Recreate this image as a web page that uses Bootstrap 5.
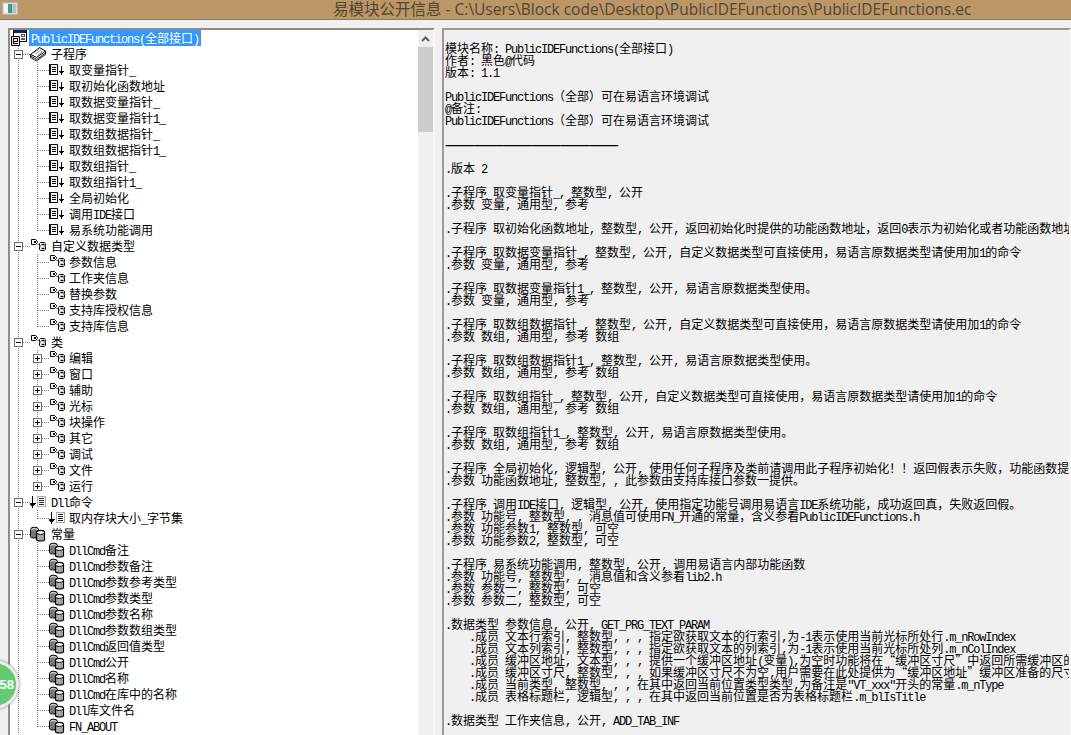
<!DOCTYPE html>
<html lang="zh">
<head>
<meta charset="utf-8">
<title>易模块公开信息</title>
<link href="https://cdn.jsdelivr.net/npm/bootstrap@5.3.0/dist/css/bootstrap.min.css" rel="stylesheet">
<style>
html,body{height:100%;overflow:hidden}
body{background:#f0f0f0;color:#000;font:12px/16px "Noto Sans CJK SC","Liberation Sans",sans-serif}
.asc{font-family:"Liberation Mono",monospace;letter-spacing:-1.2px;line-height:0}
.titlebar{height:20px;background:#bb9767;border-bottom:1px solid #8e7a60;position:relative}
.titlebar-text{font:15.5px/18px "Open Sans","Noto Sans CJK SC",sans-serif;color:#54452f;margin-left:333px;white-space:nowrap}
.appicon{width:16px;height:13px;margin:2px 0 0 2px;flex:none}
.workspace{height:715px;padding:8px 0 0 8px;gap:7px}
.tree-panel{width:427px;background:#fff;border:2px solid;border-color:#8c8c8c #f6f6f6 #f6f6f6 #8c8c8c;height:720px}
.tree-scroll{flex:1;overflow:hidden;min-width:0}
.vbar{width:15px;background:#f0f0f0;flex:none}
.vbar-btn{height:17px;color:#606060}
.vbar-thumb{height:85px;background:#cdcdcd}
.tree-list,.tree-list ul{list-style:none;margin:0;padding:0}
.trow{height:16px;white-space:nowrap}
.hl{background:#3399ff;color:#fff;padding:0 2px;height:16px;margin-left:2px}
.ico{width:16px;height:16px;flex:none;overflow:visible}
.toggle{width:9px;height:9px;flex:none}
.l0{padding-left:1px}
.l1{padding-left:4px}
.l2{padding-left:23px}
.conn{border-top:1px dotted #808080;flex:none;height:0}
.c1{width:7px}
.c2{width:12px;margin-left:4px}
.c3{width:7px}
.lab1{margin-left:5px}
.lab2{margin-left:4px}
.trunk{background:repeating-linear-gradient(#808080 0 1px,transparent 1px 2px) 8px 0/1px 100% no-repeat}
.branch{background:repeating-linear-gradient(#808080 0 1px,transparent 1px 2px) 27px 0/1px 100% no-repeat}
.branch:last-child{background-size:1px 8px}
.doc-panel{flex:1;min-width:0;height:720px;border:2px solid;border-color:#9a9a9a #f6f6f6 #f6f6f6 #9a9a9a;background:#f0f0f0;overflow:hidden}
.doc-text{margin:0;padding:12px 0 6px 1px;font:12px/12px "Noto Sans CJK SC","Liberation Sans",sans-serif;white-space:pre;color:#000;overflow:hidden;background:none;border:0}
.rule-dash{display:inline-block;width:180px;height:12px;overflow:hidden;vertical-align:top;font-weight:700;letter-spacing:-1.2px}
.float-ball{position:absolute;left:-30px;top:660px;width:49px;height:49px;border-radius:50%;background:#63cb73;border:3px solid #e9eee9;box-shadow:0 0 3px #777;color:#fff;font:bold 13px/43px "Liberation Sans",sans-serif;text-align:right;padding-right:2px}
</style>
</head>
<body>
<svg width="0" height="0" class="position-absolute">
<defs>
<symbol id="t-minus" viewBox="0 0 9 9"><rect x=".5" y=".5" width="8" height="8" fill="#fff" stroke="#707070"/><path d="M2 4.500h5" stroke="#000"/></symbol>
<symbol id="t-plus" viewBox="0 0 9 9"><rect x=".5" y=".5" width="8" height="8" fill="#fff" stroke="#707070"/><path d="M2 4.500h5M4.500 2v5" stroke="#000"/></symbol>
<symbol id="i-sub" viewBox="0 0 16 16"><path d="M1.500 2.500h7v10h-7z" fill="#fff" stroke="#000"/><path d="M.5 2v11" stroke="#000"/><path d="M3 5.500h4M3 7.500h4M3 9.500h4" stroke="#000"/><path d="M12.500 4v8.500" stroke="#000"/><path d="M10 9h5v1h-1v1h-1v2h-1v-2h-1v-1h-1z" fill="#000"/></symbol>
<symbol id="i-struct" viewBox="-1 0 16 16" overflow="visible"><path d="M.5 1.500h4l2 2v1l-2 2h-4z" fill="#fff" stroke="#000"/><path d="M3 3h2v2h-2z" fill="#000"/><path d="M6.500 6.500h2" stroke="#000" stroke-dasharray="1 1"/><path d="M9.500 4.500h4l1 1v2l-1 .5 1 .5v3l-1 1h-4l-1-1v-3l1-.5-1-.5v-2z" fill="#fff" stroke="#000"/><path d="M10.500 6.500h3M10.500 10.500h3" stroke="#000" stroke-width="1.500"/></symbol>
<symbol id="i-dll" viewBox="0 0 16 16"><path d="M2.500 2v10" stroke="#000"/><path d="M0 9h6v1h-1v1h-1v1h-1v2h-1v-2h-1v-1h-1v-1h0z" fill="#000"/><path d="M7.500 2.500h8v10h-8z" fill="#fff" stroke="#555" stroke-dasharray="1 1"/><path d="M9 4.500h5M9 6.500h5M9 8.500h5M9 10.500h5" stroke="#222"/></symbol>
<symbol id="i-const" viewBox="0 0 16 16"><path d="M.5 3.500c0-3 8-3 8 0v7c0 2-8 2-8 0z" fill="#777" stroke="#000"/><path d="M1.500 3.500c0-1 6-1 6 0" fill="none" stroke="#fff"/><path d="M6.500 6.500c0-3 8-3 8 0v7c0 2-8 2-8 0z" fill="#a6a6a6" stroke="#000" stroke-width="1.200"/><path d="M6.500 6.500c0 2.500 8 2.500 8 0s-8-2.500-8 0z" fill="#fff" stroke="#000"/></symbol>
<symbol id="i-stack" viewBox="0 0 16 16"><path d="M.5 8.500l9-7 6 3.500-9 6.500z" fill="#fff" stroke="#000"/><path d="M.5 8.500v3l6 3.500 9-6.500v-3.500M.5 10l6 3.500 9-6.500" fill="none" stroke="#000" stroke-width=".9"/><path d="M3.500 7l6-4.500M5.500 8l6-4.500M7.500 9.500l5-4" stroke="#777" stroke-width=".8"/></symbol>
<symbol id="i-root" viewBox="0 0 16 16"><path d="M2 0h14v12h-14z" fill="#fff"/><path d="M3 0h13v3h-13z" fill="#0a246a"/><path d="M2 0h1v12h-1zM15 0h1v12h-1zM2 11h14v1h-14z" fill="#000"/><path d="M10 4h4v3h-4zM10 8h4v2h-4z" fill="#555"/><path d="M11 5h2v1h-2z" fill="#fff"/><path d="M.5 6.500h8v9h-8z" fill="#ffe98a" stroke="#000"/><path d="M2 8h5v4h-4v1h4v1h-5z" fill="#0000a8"/><path d="M3 9v2h3v-2z" fill="#ffe98a"/></symbol>
</defs>
</svg>

<header class="titlebar d-flex">
  <svg class="appicon" viewBox="0 0 16 13"><rect width="16" height="13" fill="#d8d8d8" stroke="#9a9a9a"/><rect x="2" y="2" width="4" height="9" fill="#f2f2f2"/><rect x="6" y="2" width="4" height="9" fill="#3f9f8f"/><rect x="10" y="2" width="4" height="9" fill="#b8c4c4"/></svg>
  <div class="titlebar-text position-absolute">易模块公开信息 - C:\Users\Block code\Desktop\PublicIDEFunctions\PublicIDEFunctions.ec</div>
</header>

<main class="workspace d-flex">
  <section class="tree-panel d-flex">
    <div class="tree-scroll" data-asc>
      <ul class="tree-list">
        <li class="trow d-flex align-items-center l0"><svg class="ico"><use href="#i-root"/></svg><span class="hl">PublicIDEFunctions(全部接口)</span></li>
        <li class="trunk">
          <div class="trow d-flex align-items-center l1"><svg class="toggle"><use href="#t-minus"/></svg><span class="conn c1"></span><svg class="ico"><use href="#i-stack"/></svg><span class="lab1">子程序</span></div>
          <ul>
            <li class="branch"><div class="trow d-flex align-items-center l2"><span class="conn c2"></span><svg class="ico"><use href="#i-sub"/></svg><span class="lab2">取变量指针_</span></div></li>
            <li class="branch"><div class="trow d-flex align-items-center l2"><span class="conn c2"></span><svg class="ico"><use href="#i-sub"/></svg><span class="lab2">取初始化函数地址</span></div></li>
            <li class="branch"><div class="trow d-flex align-items-center l2"><span class="conn c2"></span><svg class="ico"><use href="#i-sub"/></svg><span class="lab2">取数据变量指针_</span></div></li>
            <li class="branch"><div class="trow d-flex align-items-center l2"><span class="conn c2"></span><svg class="ico"><use href="#i-sub"/></svg><span class="lab2">取数据变量指针1_</span></div></li>
            <li class="branch"><div class="trow d-flex align-items-center l2"><span class="conn c2"></span><svg class="ico"><use href="#i-sub"/></svg><span class="lab2">取数组数据指针_</span></div></li>
            <li class="branch"><div class="trow d-flex align-items-center l2"><span class="conn c2"></span><svg class="ico"><use href="#i-sub"/></svg><span class="lab2">取数组数据指针1_</span></div></li>
            <li class="branch"><div class="trow d-flex align-items-center l2"><span class="conn c2"></span><svg class="ico"><use href="#i-sub"/></svg><span class="lab2">取数组指针_</span></div></li>
            <li class="branch"><div class="trow d-flex align-items-center l2"><span class="conn c2"></span><svg class="ico"><use href="#i-sub"/></svg><span class="lab2">取数组指针1_</span></div></li>
            <li class="branch"><div class="trow d-flex align-items-center l2"><span class="conn c2"></span><svg class="ico"><use href="#i-sub"/></svg><span class="lab2">全局初始化</span></div></li>
            <li class="branch"><div class="trow d-flex align-items-center l2"><span class="conn c2"></span><svg class="ico"><use href="#i-sub"/></svg><span class="lab2">调用IDE接口</span></div></li>
            <li class="branch"><div class="trow d-flex align-items-center l2"><span class="conn c2"></span><svg class="ico"><use href="#i-sub"/></svg><span class="lab2">易系统功能调用</span></div></li>
          </ul>
        </li>
        <li class="trunk">
          <div class="trow d-flex align-items-center l1"><svg class="toggle"><use href="#t-minus"/></svg><span class="conn c1"></span><svg class="ico"><use href="#i-struct"/></svg><span class="lab1">自定义数据类型</span></div>
          <ul>
            <li class="branch"><div class="trow d-flex align-items-center l2"><span class="conn c2"></span><svg class="ico"><use href="#i-struct"/></svg><span class="lab2">参数信息</span></div></li>
            <li class="branch"><div class="trow d-flex align-items-center l2"><span class="conn c2"></span><svg class="ico"><use href="#i-struct"/></svg><span class="lab2">工作夹信息</span></div></li>
            <li class="branch"><div class="trow d-flex align-items-center l2"><span class="conn c2"></span><svg class="ico"><use href="#i-struct"/></svg><span class="lab2">替换参数</span></div></li>
            <li class="branch"><div class="trow d-flex align-items-center l2"><span class="conn c2"></span><svg class="ico"><use href="#i-struct"/></svg><span class="lab2">支持库授权信息</span></div></li>
            <li class="branch"><div class="trow d-flex align-items-center l2"><span class="conn c2"></span><svg class="ico"><use href="#i-struct"/></svg><span class="lab2">支持库信息</span></div></li>
          </ul>
        </li>
        <li class="trunk">
          <div class="trow d-flex align-items-center l1"><svg class="toggle"><use href="#t-minus"/></svg><span class="conn c1"></span><svg class="ico"><use href="#i-struct"/></svg><span class="lab1">类</span></div>
          <ul>
            <li class="branch"><div class="trow d-flex align-items-center l2"><svg class="toggle"><use href="#t-plus"/></svg><span class="conn c3"></span><svg class="ico"><use href="#i-struct"/></svg><span class="lab2">编辑</span></div></li>
            <li class="branch"><div class="trow d-flex align-items-center l2"><svg class="toggle"><use href="#t-plus"/></svg><span class="conn c3"></span><svg class="ico"><use href="#i-struct"/></svg><span class="lab2">窗口</span></div></li>
            <li class="branch"><div class="trow d-flex align-items-center l2"><svg class="toggle"><use href="#t-plus"/></svg><span class="conn c3"></span><svg class="ico"><use href="#i-struct"/></svg><span class="lab2">辅助</span></div></li>
            <li class="branch"><div class="trow d-flex align-items-center l2"><svg class="toggle"><use href="#t-plus"/></svg><span class="conn c3"></span><svg class="ico"><use href="#i-struct"/></svg><span class="lab2">光标</span></div></li>
            <li class="branch"><div class="trow d-flex align-items-center l2"><svg class="toggle"><use href="#t-plus"/></svg><span class="conn c3"></span><svg class="ico"><use href="#i-struct"/></svg><span class="lab2">块操作</span></div></li>
            <li class="branch"><div class="trow d-flex align-items-center l2"><svg class="toggle"><use href="#t-plus"/></svg><span class="conn c3"></span><svg class="ico"><use href="#i-struct"/></svg><span class="lab2">其它</span></div></li>
            <li class="branch"><div class="trow d-flex align-items-center l2"><svg class="toggle"><use href="#t-plus"/></svg><span class="conn c3"></span><svg class="ico"><use href="#i-struct"/></svg><span class="lab2">调试</span></div></li>
            <li class="branch"><div class="trow d-flex align-items-center l2"><svg class="toggle"><use href="#t-plus"/></svg><span class="conn c3"></span><svg class="ico"><use href="#i-struct"/></svg><span class="lab2">文件</span></div></li>
            <li class="branch"><div class="trow d-flex align-items-center l2"><svg class="toggle"><use href="#t-plus"/></svg><span class="conn c3"></span><svg class="ico"><use href="#i-struct"/></svg><span class="lab2">运行</span></div></li>
          </ul>
        </li>
        <li class="trunk">
          <div class="trow d-flex align-items-center l1"><svg class="toggle"><use href="#t-minus"/></svg><span class="conn c1"></span><svg class="ico"><use href="#i-dll"/></svg><span class="lab1">Dll命令</span></div>
          <ul>
            <li class="branch"><div class="trow d-flex align-items-center l2"><span class="conn c2"></span><svg class="ico"><use href="#i-dll"/></svg><span class="lab2">取内存块大小_字节集</span></div></li>
          </ul>
        </li>
        <li class="trunk">
          <div class="trow d-flex align-items-center l1"><svg class="toggle"><use href="#t-minus"/></svg><span class="conn c1"></span><svg class="ico"><use href="#i-const"/></svg><span class="lab1">常量</span></div>
          <ul>
            <li class="branch"><div class="trow d-flex align-items-center l2"><span class="conn c2"></span><svg class="ico"><use href="#i-const"/></svg><span class="lab2">DllCmd备注</span></div></li>
            <li class="branch"><div class="trow d-flex align-items-center l2"><span class="conn c2"></span><svg class="ico"><use href="#i-const"/></svg><span class="lab2">DllCmd参数备注</span></div></li>
            <li class="branch"><div class="trow d-flex align-items-center l2"><span class="conn c2"></span><svg class="ico"><use href="#i-const"/></svg><span class="lab2">DllCmd参数参考类型</span></div></li>
            <li class="branch"><div class="trow d-flex align-items-center l2"><span class="conn c2"></span><svg class="ico"><use href="#i-const"/></svg><span class="lab2">DllCmd参数类型</span></div></li>
            <li class="branch"><div class="trow d-flex align-items-center l2"><span class="conn c2"></span><svg class="ico"><use href="#i-const"/></svg><span class="lab2">DllCmd参数名称</span></div></li>
            <li class="branch"><div class="trow d-flex align-items-center l2"><span class="conn c2"></span><svg class="ico"><use href="#i-const"/></svg><span class="lab2">DllCmd参数数组类型</span></div></li>
            <li class="branch"><div class="trow d-flex align-items-center l2"><span class="conn c2"></span><svg class="ico"><use href="#i-const"/></svg><span class="lab2">DllCmd返回值类型</span></div></li>
            <li class="branch"><div class="trow d-flex align-items-center l2"><span class="conn c2"></span><svg class="ico"><use href="#i-const"/></svg><span class="lab2">DllCmd公开</span></div></li>
            <li class="branch"><div class="trow d-flex align-items-center l2"><span class="conn c2"></span><svg class="ico"><use href="#i-const"/></svg><span class="lab2">DllCmd名称</span></div></li>
            <li class="branch"><div class="trow d-flex align-items-center l2"><span class="conn c2"></span><svg class="ico"><use href="#i-const"/></svg><span class="lab2">DllCmd在库中的名称</span></div></li>
            <li class="branch"><div class="trow d-flex align-items-center l2"><span class="conn c2"></span><svg class="ico"><use href="#i-const"/></svg><span class="lab2">Dll库文件名</span></div></li>
            <li class="branch"><div class="trow d-flex align-items-center l2"><span class="conn c2"></span><svg class="ico"><use href="#i-const"/></svg><span class="lab2">FN_ABOUT</span></div></li>
          </ul>
        </li>
      </ul>
    </div>
    <div class="vbar d-flex flex-column">
      <div class="vbar-btn d-flex align-items-center justify-content-center"><svg width="9" height="6" viewBox="0 0 9 6"><path d="M1 5l3.500-3.500L8 5" fill="none" stroke="currentColor" stroke-width="2"/></svg></div>
      <div class="vbar-thumb"></div>
    </div>
  </section>
  <section class="doc-panel">
<pre class="doc-text" data-asc>模块名称: PublicIDEFunctions(全部接口)
作者: 黑色@代码
版本: 1.1

PublicIDEFunctions（全部）可在易语言环境调试
@备注:
PublicIDEFunctions（全部）可在易语言环境调试

<span class="rule-dash">——————————————————</span>

.版本 2

.子程序 取变量指针_, 整数型, 公开
.参数 变量, 通用型, 参考

.子程序 取初始化函数地址, 整数型, 公开, 返回初始化时提供的功能函数地址，返回0表示为初始化或者功能函数地址为空

.子程序 取数据变量指针_, 整数型, 公开, 自定义数据类型可直接使用，易语言原数据类型请使用加1的命令
.参数 变量, 通用型, 参考

.子程序 取数据变量指针1_, 整数型, 公开, 易语言原数据类型使用。
.参数 变量, 通用型, 参考

.子程序 取数组数据指针_, 整数型, 公开, 自定义数据类型可直接使用，易语言原数据类型请使用加1的命令
.参数 数组, 通用型, 参考 数组

.子程序 取数组数据指针1_, 整数型, 公开, 易语言原数据类型使用。
.参数 数组, 通用型, 参考 数组

.子程序 取数组指针_, 整数型, 公开, 自定义数据类型可直接使用，易语言原数据类型请使用加1的命令
.参数 数组, 通用型, 参考 数组

.子程序 取数组指针1_, 整数型, 公开, 易语言原数据类型使用。
.参数 数组, 通用型, 参考 数组

.子程序 全局初始化, 逻辑型, 公开, 使用任何子程序及类前请调用此子程序初始化！！返回假表示失败，功能函数提供
.参数 功能函数地址, 整数型, , 此参数由支持库接口参数一提供。

.子程序 调用IDE接口, 逻辑型, 公开, 使用指定功能号调用易语言IDE系统功能，成功返回真，失败返回假。
.参数 功能号, 整数型, , 消息值可使用FN_开通的常量，含义参看PublicIDEFunctions.h
.参数 功能参数1, 整数型, 可空
.参数 功能参数2, 整数型, 可空

.子程序 易系统功能调用, 整数型, 公开, 调用易语言内部功能函数
.参数 功能号, 整数型, , 消息值和含义参看lib2.h
.参数 参数一, 整数型, 可空
.参数 参数二, 整数型, 可空

.数据类型 参数信息, 公开, GET_PRG_TEXT_PARAM
    .成员 文本行索引, 整数型, , , 指定欲获取文本的行索引,为-1表示使用当前光标所处行.m_nRowIndex
    .成员 文本列索引, 整数型, , , 指定欲获取文本的列索引,为-1表示使用当前光标所处列.m_nColIndex
    .成员 缓冲区地址, 文本型, , , 提供一个缓冲区地址(变量),为空时功能将在“缓冲区寸尺”中返回所需缓冲区的尺寸
    .成员 缓冲区寸尺, 整数型, , , 如果缓冲区寸尺不为空,用户需要在此处提供为“缓冲区地址”缓冲区准备的尺寸
    .成员 当前类型, 整数型, , , 在其中返回当前位置类型类型,为备注是"VT_xxx"开头的常量.m_nType
    .成员 表格标题栏, 逻辑型, , , 在其中返回当前位置是否为表格标题栏.m_blIsTitle

.数据类型 工作夹信息, 公开, ADD_TAB_INF</pre>
  </section>
</main>
<div class="float-ball">58</div>
<script>
document.querySelectorAll('[data-asc]').forEach(function(root){
  var w=document.createTreeWalker(root,NodeFilter.SHOW_TEXT),nodes=[],n;
  while(n=w.nextNode()){if(n.nodeValue.trim())nodes.push(n);}
  nodes.forEach(function(t){
    var f=document.createDocumentFragment();
    t.nodeValue.split(/([\x20-\x7e]+)/).forEach(function(p,i){
      if(!p)return;
      if(i%2){var s=document.createElement('span');s.className='asc';s.textContent=p;f.appendChild(s);}
      else f.appendChild(document.createTextNode(p));
    });
    t.parentNode.replaceChild(f,t);
  });
});
</script>
</body>
</html>
